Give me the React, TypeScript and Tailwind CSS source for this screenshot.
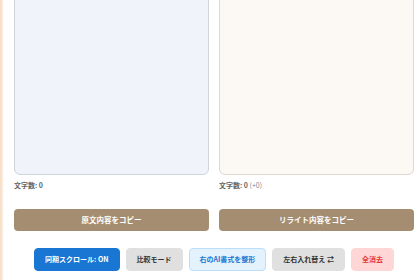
import React from 'react';

const font = { fontFamily: '"Noto Sans CJK JP", "Noto Sans", sans-serif' };

interface ToolButton {
  label: string;
  className: string;
}

const tools: ToolButton[] = [
  { label: '同期スクロール: ON', className: 'bg-[#1976d2] text-white border-[#1976d2]' },
  { label: '比較モード', className: 'bg-[#e0e0e0] text-[#333] border-[#e0e0e0]' },
  { label: '右のAI書式を整形', className: 'bg-[#e3f2fd] text-[#1976d2] border-[#bbdefb]' },
  { label: '左右入れ替え ⇄', className: 'bg-[#e0e0e0] text-[#333] border-[#e0e0e0]' },
  { label: '全消去', className: 'bg-[#ffd6d6] text-[#e53935] border-[#ffd6d6]' },
];

const App: React.FC = () => {
  return (
    <div className="flex h-[280px] w-[420px] overflow-hidden bg-white" style={font}>
      {/* page background edge */}
      <div className="w-[3px] shrink-0 bg-gradient-to-r from-[#f5dcc8] to-[#fbeee3]" />

      <div className="flex w-[417px] shrink-0 flex-col pl-[11px]">
        {/* Editors */}
        <div className="-mt-[20px] grid w-[400px] grid-cols-2 gap-[10px]">
          <div>
            <div className="h-[195px] rounded-[6px] border border-[#cfd4db] bg-[#f0f4fa]" />
            <div className="mt-[5px] text-[7px] font-bold leading-[10px] text-[#666]">文字数: 0</div>
            <button className="mt-[19px] h-[22px] w-full rounded-[4px] bg-[#a58d72] text-[7.5px] font-bold text-white">
              原文内容をコピー
            </button>
          </div>
          <div>
            <div className="h-[195px] rounded-[6px] border border-[#dcd8d2] bg-[#fcf9f4]" />
            <div className="mt-[5px] text-[7px] font-bold leading-[10px] text-[#666]">
              文字数: 0 <span className="font-normal text-[#888]">(+0)</span>
            </div>
            <button className="mt-[19px] h-[22px] w-full rounded-[4px] bg-[#a58d72] text-[7.5px] font-bold text-white">
              リライト内容をコピー
            </button>
          </div>
        </div>

        {/* Toolbar */}
        <div className="mt-[17px] flex w-[400px] justify-center gap-[6px]">
          {tools.map((tool) => (
            <button
              key={tool.label}
              className={`h-[23px] rounded-[4px] border px-[10px] text-[7px] font-bold ${tool.className}`}
            >
              {tool.label}
            </button>
          ))}
        </div>
      </div>
    </div>
  );
};

export default App;
